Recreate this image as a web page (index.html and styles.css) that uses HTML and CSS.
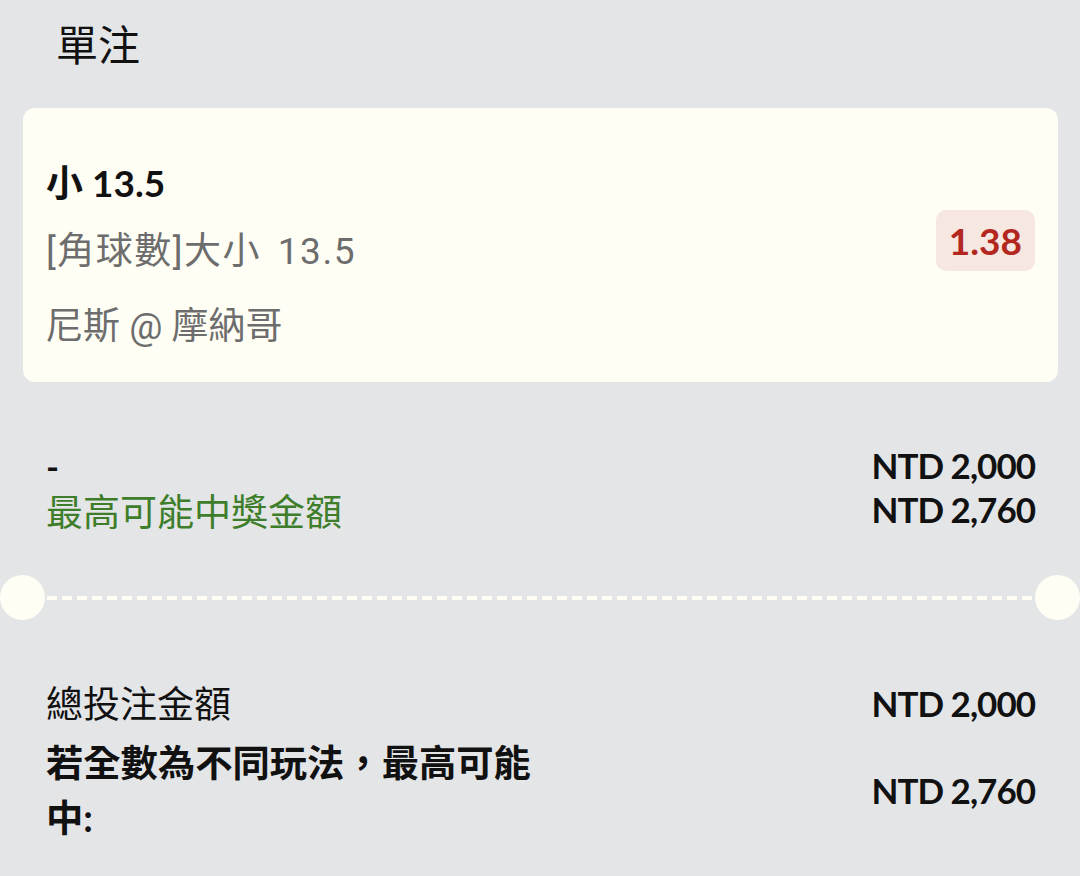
FILE: index.html
```html
<!DOCTYPE html>
<html lang="zh-Hant">
<head>
    <meta charset="UTF-8">
    <meta name="viewport" content="width=device-width, initial-scale=1.0">
    <title>單注</title>
    <link rel="stylesheet" href="styles.css">
</head>
<body>
    <div class="slip">
        <h1 class="slip-title">單注</h1>

        <div class="bet-card">
            <div class="bet-info">
                <div class="bet-pick">小 13.5</div>
                <div class="bet-market">[角球數]大小 13.5</div>
                <div class="bet-match">尼斯 @ 摩納哥</div>
            </div>
            <div class="odds">1.38</div>
        </div>

        <div class="stake-row">
            <div class="stake-left">
                <div class="stake-dash">-</div>
                <div class="stake-win">最高可能中獎金額</div>
            </div>
            <div class="stake-right">
                <div>NTD 2,000</div>
                <div>NTD 2,760</div>
            </div>
        </div>

        <div class="divider">
            <span class="notch"></span>
            <span class="dashes"></span>
            <span class="notch"></span>
        </div>

        <div class="summary">
            <div class="summary-row">
                <div class="summary-label">總投注金額</div>
                <div class="summary-value">NTD 2,000</div>
            </div>
            <div class="summary-row summary-row--center">
                <div class="summary-label summary-label--bold">若全數為不同玩法，最高可能中:</div>
                <div class="summary-value">NTD 2,760</div>
            </div>
        </div>
    </div>
</body>
</html>
```

FILE: styles.css
```css
body {
    margin: 0;
    padding: 0;
    background-color: #e4e5e7;
    font-family: 'Lato', 'Noto Sans CJK TC', sans-serif;
    color: #111;
}

.slip {
    padding: 0 22px 0 23px;
}

.slip-title {
    margin: 0;
    padding-left: 33px;
    font-size: 42px;
    font-weight: 400;
    line-height: 90px;
    color: #111;
}

.bet-card {
    margin-top: 18px;
    display: flex;
    justify-content: space-between;
    align-items: flex-start;
    background-color: #fffef5;
    border-radius: 12px;
    padding: 50px 23px 30px 23px;
}

.bet-pick {
    font-size: 37px;
    font-weight: 700;
    line-height: 50px;
}

.bet-market,
.bet-match {
    font-family: 'Roboto', 'Noto Sans CJK TC', sans-serif;
    font-size: 37px;
    line-height: 50px;
    color: #6d6d6d;
}

.bet-market {
    margin-top: 19px;
    letter-spacing: 1.5px;
    word-spacing: 6px;
}

.bet-match {
    margin-top: 25px;
}

.odds {
    margin-top: 52px;
    padding: 0 13px;
    height: 61px;
    line-height: 61px;
    font-size: 37px;
    font-weight: 700;
    color: #b3271f;
    background-color: #f6e7e1;
    border-radius: 10px;
}

.stake-row {
    margin-top: 61px;
    display: flex;
    justify-content: space-between;
    align-items: flex-start;
    padding: 0 23px;
}

.stake-left {
    line-height: 46px;
}

.stake-dash {
    font-size: 35px;
    font-weight: 700;
}

.stake-win {
    font-size: 37px;
    color: #3e7e2b;
}

.stake-right {
    font-size: 35px;
    font-weight: 700;
    line-height: 44px;
    letter-spacing: -1px;
    text-align: right;
}

.divider {
    margin: 40px -22px 0 -23px;
    display: flex;
    align-items: center;
}

.notch {
    flex: 0 0 45px;
    height: 45px;
    border-radius: 50%;
    background-color: #fffef5;
}

.dashes {
    flex: 1;
    height: 4px;
    margin: 0 2px;
    background: repeating-linear-gradient(to right, #fffef5 0, #fffef5 10px, transparent 10px, transparent 15px);
}

.summary {
    margin-top: 61px;
    padding: 0 23px;
}

.summary-row {
    display: flex;
    justify-content: space-between;
    align-items: flex-start;
}

.summary-row--center {
    margin-top: 8px;
    align-items: center;
}

.summary-label {
    max-width: 50%;
    font-size: 37px;
    line-height: 46px;
}

.summary-label--bold {
    font-size: 37.3px;
    font-weight: 700;
    line-height: 55px;
}

.summary-value {
    font-size: 35px;
    font-weight: 700;
    line-height: 44px;
    letter-spacing: -1px;
    white-space: nowrap;
}
```
